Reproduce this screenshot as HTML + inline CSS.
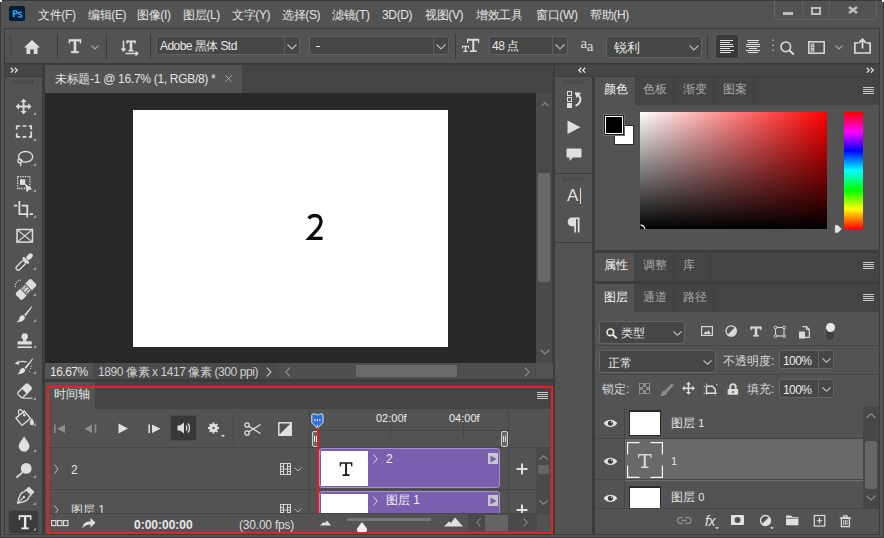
<!DOCTYPE html>
<html><head><meta charset="utf-8">
<style>
*{box-sizing:border-box;margin:0;padding:0}
html,body{width:884px;height:538px;overflow:hidden;background:#505050}
body{position:relative;font-family:"Liberation Sans",sans-serif;font-size:12px;color:#d8d8d8}
.a{position:absolute}
.t{white-space:nowrap;line-height:1}
svg{position:absolute;overflow:visible}
.sep{position:absolute;width:1px;background:#3c3c3c}
.dd{position:absolute;background:#464646;border:1px solid #626262;border-radius:3px}
.m{position:absolute;top:8.6px;font-size:12px;color:#e4e4e4;letter-spacing:-0.35px;white-space:nowrap;line-height:1}
</style></head><body>
<!-- frame -->
<div class="a" style="left:0;top:0;width:884px;height:538px;border:1px solid #3a3a3a;border-radius:3px 3px 0 0;background:#535353"></div>
<div class="a" style="left:0;top:0;width:2px;height:2px;background:#e8e8e8"></div>
<div class="a" style="left:882px;top:0;width:2px;height:2px;background:#e8e8e8"></div>

<!-- menu bar -->
<div class="a" style="left:9px;top:6px;width:16px;height:15px;background:#001e36;border-radius:2px"></div>
<svg style="left:0;top:0" width="30" height="30"><path fill-rule="evenodd" d="M12.8 10.2H15.6C17.2 10.2 17.9 11.1 17.9 12.3C17.9 13.6 17.1 14.6 15.6 14.6H14.4V17H12.8ZM14.4 11.5V13.3H15.5C16 13.3 16.3 12.9 16.3 12.4C16.3 11.8 16 11.5 15.5 11.5Z" fill="#31a8ff"/><path d="M22 12.9C21.3 12.4 20.7 12.2 20 12.2C19.1 12.2 18.5 12.6 18.5 13.3C18.5 14.9 22 14.3 22 15.9C22 16.6 21.3 17.1 20.2 17.1C19.4 17.1 18.7 16.8 18.1 16.3" stroke="#31a8ff" stroke-width="1.3" fill="none"/></svg>
<div class="m" style="left:38px">文件(F)</div>
<div class="m" style="left:88px">编辑(E)</div>
<div class="m" style="left:137px">图像(I)</div>
<div class="m" style="left:183px">图层(L)</div>
<div class="m" style="left:232px">文字(Y)</div>
<div class="m" style="left:282px">选择(S)</div>
<div class="m" style="left:332px">滤镜(T)</div>
<div class="m" style="left:382px">3D(D)</div>
<div class="m" style="left:425px">视图(V)</div>
<div class="m" style="left:476px">增效工具</div>
<div class="m" style="left:536px">窗口(W)</div>
<div class="m" style="left:590px">帮助(H)</div>
<div class="a" style="left:774px;top:-3px;width:103px;height:23px;border:1px solid #636363;border-radius:4px"></div>
<div class="sep" style="left:802px;top:0;height:19px;background:#5e5e5e"></div>
<div class="sep" style="left:829px;top:0;height:19px;background:#5e5e5e"></div>
<div class="a" style="left:783px;top:12px;width:10px;height:3px;background:#bdbdbd"></div>
<div class="a" style="left:811px;top:7px;width:10px;height:8px;border:2px solid #bdbdbd"></div>
<svg style="left:0;top:0" width="884" height="30"><path d="M849 7L857 13M857 7L849 13" stroke="#bdbdbd" stroke-width="2.6"/></svg>

<!-- options bar -->
<div class="a" style="left:4px;top:28px;width:876px;height:36px;background:#535353;border:1px solid #3a3a3a"></div>
<svg style="left:9px;top:37px" width="3" height="20"><path d="M1.5 0V19" stroke="#3e3e3e" stroke-width="1.6" stroke-dasharray="1 1"/></svg>
<svg style="left:24px;top:40px" width="16" height="14"><path d="M8 0L16 7.5H13.5V14H9.8V9.5H6.2V14H2.5V7.5H0Z" fill="#dcdcdc"/></svg>
<div class="sep" style="left:57px;top:34px;height:25px"></div>
<svg style="left:0;top:0" width="100" height="60"><path d="M68.8 39.3H81.1V43.3H79.9V41.3H76.1V51.3H78.7V53H71.2V51.3H73.8V41.3H70V43.3H68.8Z" fill="#dcdcdc" stroke="#dcdcdc" stroke-width="0.3"/></svg>
<svg style="left:91px;top:45px" width="8" height="5"><path d="M0.5 0.5L4 4L7.5 0.5" stroke="#a8a8a8" fill="none" stroke-width="1.1"/></svg>
<div class="sep" style="left:106px;top:34px;height:25px"></div>
<svg style="left:121px;top:40px" width="18" height="16"><path d="M2.5 0.5V10.5M0.5 8.5L2.5 10.8L4.5 8.5" stroke="#dcdcdc" fill="none" stroke-width="1.5"/><path d="M5.5 0.8H14.5V3.3H13.6V2H11V10.2H12.3V11.3H7.7V10.2H9V2H6.4V3.3H5.5Z" fill="#dcdcdc" stroke="#dcdcdc" stroke-width="0.6"/><path d="M4.5 13.5H16.5M14.5 11.5L16.8 13.5L14.5 15.5" stroke="#dcdcdc" fill="none" stroke-width="1.5"/></svg>
<div class="sep" style="left:150px;top:34px;height:25px"></div>

<div class="dd" style="left:156px;top:36px;width:144px;height:19px"></div>
<div class="sep" style="left:284px;top:37px;height:17px;background:#5e5e5e"></div>
<div class="a t" style="left:160px;top:40px;font-size:12px;color:#e8e8e8;letter-spacing:-0.55px">Adobe 黑体 Std</div>
<svg style="left:287px;top:44px" width="10" height="6"><path d="M0.5 0.5L5 5L9.5 0.5" stroke="#bdbdbd" fill="none" stroke-width="1.1"/></svg>

<div class="dd" style="left:309px;top:36px;width:140px;height:19px"></div>
<div class="sep" style="left:433px;top:37px;height:17px;background:#5e5e5e"></div>
<div class="a" style="left:316px;top:46px;width:4px;height:1px;background:#e8e8e8"></div>
<svg style="left:436px;top:44px" width="10" height="6"><path d="M0.5 0.5L5 5L9.5 0.5" stroke="#bdbdbd" fill="none" stroke-width="1.1"/></svg>
<div class="sep" style="left:455px;top:34px;height:25px"></div>

<svg style="left:0;top:0" width="884" height="60"><path d="M467 38.8H479.2V43H478V40.7H474.3V50.3H476.6V52H470V50.3H472.3V40.7H468.2V43H467Z" fill="#dcdcdc"/><path d="M462 45.8H469V48.4H468.1V47.1H466.2V50.8H467.6V52H463.4V50.8H464.8V47.1H462.9V48.4H462Z" fill="#dcdcdc"/></svg>
<div class="dd" style="left:489px;top:36px;width:79px;height:19px"></div>
<div class="sep" style="left:552px;top:37px;height:17px;background:#5e5e5e"></div>
<div class="a t" style="left:492px;top:40px;font-size:12px;color:#e8e8e8;letter-spacing:-0.5px">48 点</div>
<svg style="left:555px;top:44px" width="10" height="6"><path d="M0.5 0.5L5 5L9.5 0.5" stroke="#bdbdbd" fill="none" stroke-width="1.1"/></svg>
<div class="a t" style="left:580.5px;top:35.7px;font-size:15px;font-family:'Liberation Serif',serif;color:#dcdcdc">a</div>
<div class="a t" style="left:586.8px;top:38.8px;font-size:15px;font-family:'Liberation Serif',serif;color:#dcdcdc">a</div>

<div class="dd" style="left:606px;top:36px;width:96px;height:22px"></div>
<div class="a t" style="left:614px;top:41px;font-size:13px;color:#e8e8e8">锐利</div>
<svg style="left:689px;top:45px" width="10" height="6"><path d="M0.5 0.5L5 5L9.5 0.5" stroke="#bdbdbd" fill="none" stroke-width="1.1"/></svg>
<div class="sep" style="left:707px;top:34px;height:25px"></div>

<div class="a" style="left:715px;top:34px;width:24px;height:25px;background:#393939;border:1px solid #5a5a5a;border-radius:3px"></div>
<svg style="left:0;top:0" width="800" height="60"><path d="M720 40.5H733M720 42.5H730M720 44.5H733M720 46.5H734M720 48.5H730M720 50.5H734M720 52.5H731" stroke="#e4e4e4" stroke-width="1"/></svg>
<svg style="left:0;top:0" width="800" height="60"><path d="M747 40.5H759M748 42.5H758M746 44.5H760M746 46.5H760M749 48.5H757M746 50.5H760M748 52.5H758" stroke="#e4e4e4" stroke-width="1"/></svg>
<svg style="left:772px;top:39px" width="2" height="13"><path d="M1 0.5V2M1 5.5V7M1 10.5V12" stroke="#bdbdbd" stroke-width="1.3"/></svg>
<svg style="left:780px;top:41px" width="15" height="14"><circle cx="5.8" cy="5.8" r="4.8" stroke="#dcdcdc" stroke-width="1.6" fill="none"/><path d="M9.3 9.3L13.8 13.6" stroke="#dcdcdc" stroke-width="2"/></svg>
<svg style="left:808px;top:41px" width="18" height="13"><rect x="0.8" y="0.8" width="15.4" height="11.4" stroke="#dcdcdc" stroke-width="1.5" fill="none"/><rect x="3.2" y="3" width="2.6" height="2" fill="none" stroke="#dcdcdc" stroke-width="0.9"/><rect x="3.2" y="5.6" width="2.6" height="2" fill="none" stroke="#dcdcdc" stroke-width="0.9"/><rect x="3.2" y="8.2" width="2.6" height="2" fill="none" stroke="#dcdcdc" stroke-width="0.9"/></svg>
<svg style="left:835px;top:45px" width="8" height="5"><path d="M0.5 0.5L4 4L7.5 0.5" stroke="#a8a8a8" fill="none" stroke-width="1.1"/></svg>
<svg style="left:854px;top:38px" width="17" height="16"><path d="M4.5 5H0.9V15H16.1V5H12.5" stroke="#dcdcdc" stroke-width="1.7" fill="none"/><path d="M8.5 10.5V1.5M5 4.8L8.5 1.2L12 4.8" stroke="#dcdcdc" stroke-width="1.8" fill="none"/></svg>

<!-- left toolbar -->
<div class="a" style="left:4px;top:64px;width:40px;height:471px;background:#3c3c3c"></div>
<div class="a" style="left:5px;top:65px;width:37px;height:11px;background:#454545"></div>
<svg style="left:10px;top:67px" width="10" height="7"><path d="M0.8 0.8L3.2 3.2L0.8 5.6M4.8 0.8L7.2 3.2L4.8 5.6" stroke="#e0e0e0" fill="none" stroke-width="1.3"/></svg>
<div class="a" style="left:5px;top:77px;width:37px;height:457px;background:#535353"></div>
<svg style="left:0;top:0" width="50" height="100"><path d="M14.5 80V84M16.5 80V84M18.5 80V84M20.5 80V84M22.5 80V84M24.5 80V84M26.5 80V84M28.5 80V84M30.5 80V84M32.5 80V84" stroke="#444" stroke-width="1"/></svg>
<!-- tool icons -->
<svg style="left:0;top:0" width="50" height="538">
<g fill="#a4a4a4" stroke="none">
<path d="M36 112V115H33Z"/><path d="M36 138V141H33Z"/><path d="M36 163V166H33Z"/><path d="M36 189V192H33Z"/><path d="M36 215V218H33Z"/>
<path d="M36 267V270H33Z"/><path d="M36 293V296H33Z"/><path d="M36 319V322H33Z"/><path d="M36 345V348H33Z"/><path d="M36 371V374H33Z"/>
<path d="M36 397V400H33Z"/><path d="M36 423V426H33Z"/><path d="M36 449V452H33Z"/><path d="M36 475V478H33Z"/><path d="M36 502V505H33Z"/>
</g>
<g fill="#dedede" stroke="#dedede" stroke-width="1.8" fill-rule="nonzero">
<!-- move -->
<path d="M23.6 101V112M18.5 106.5H28.7" fill="none"/>
<path d="M23.6 98.7L20.4 102H26.8Z M23.6 114.3L20.4 111H26.8Z M15.7 106.5L19 103.3V109.7Z M31.5 106.5L28.2 103.3V109.7Z" stroke="none"/>
<!-- marquee -->
<path d="M16.7 129.5V126H20.2M22.6 126H26.4M28.8 126H31.2V129.5M31.2 131.6V133.3M31.2 133.3V136.8H28.8M26.4 136.8H22.6M20.2 136.8H16.7V133.3M16.7 131.6V131.6" fill="none" stroke-width="1.7"/>
<!-- lasso -->
<ellipse cx="25.6" cy="156.8" rx="7.1" ry="5.3" fill="none" stroke-width="1.4"/>
<circle cx="19.8" cy="161" r="1.9" fill="none" stroke-width="1.3"/>
<path d="M20.5 162.8Q21.5 165 20.3 166.3" fill="none" stroke-width="1.3"/>
<!-- object select -->
<rect x="17.6" y="176.7" width="12.2" height="11.8" fill="none" stroke-width="1.3" stroke-dasharray="1.3 1.1"/>
<rect x="20" y="179.3" width="5.2" height="5.6" stroke="none"/>
<path d="M24.8 183.2L32.6 189.6L29 189.8L26.8 192.4Z" stroke="none"/>
<!-- crop -->
<path d="M13.9 205.6H17.3M19.4 201V214.1H27.3M21.6 205.6H27.3V217.6M29.5 214.1H33" fill="none" stroke-width="1.8"/>
<!-- frame -->
<rect x="17" y="229.5" width="15.5" height="12.6" fill="none" stroke-width="1.5"/>
<path d="M17 229.5L32.5 242.1M32.5 229.5L17 242.1" fill="none" stroke-width="1.1"/>
<!-- eyedropper -->
<g transform="rotate(45 24.1 262.1)">
<rect x="22" y="261" width="4.2" height="11.5" rx="2.1" fill="none" stroke-width="1.3"/>
<rect x="19.9" y="258.4" width="8.4" height="2.6" rx="1" stroke="none"/>
<rect x="21.8" y="250.8" width="4.6" height="7.2" rx="2.3" stroke="none"/>
</g>
<!-- healing -->
<g transform="rotate(45 26 289.5)">
<rect x="21.3" y="278.5" width="9.4" height="22" rx="2" stroke="none"/>
<rect x="21.3" y="285.8" width="9.4" height="7.4" fill="#535353" stroke="none"/>
<rect x="22.3" y="286.8" width="7.4" height="5.4" stroke="none"/>
<circle cx="24.3" cy="288.3" r="0.9" fill="#535353" stroke="none"/><circle cx="27.7" cy="288.3" r="0.9" fill="#535353" stroke="none"/>
<circle cx="24.3" cy="290.7" r="0.9" fill="#535353" stroke="none"/><circle cx="27.7" cy="290.7" r="0.9" fill="#535353" stroke="none"/>
</g>
<path d="M15.4 287A5.8 5.8 0 0 1 22 280.2" fill="none" stroke-width="1.1" stroke-dasharray="1.1 1.1"/>
<!-- brush -->
<path d="M31.6 306.2L24.2 314.8L25.6 316.2L32.2 306.9Z" stroke="none"/>
<path d="M23.4 315.3C20.5 315.2 19.3 317.3 19.2 318.9C19.1 320.3 17.9 321.4 16.2 322.1C20 322.6 24.5 321 25 317.3Z" stroke="none"/>
<!-- stamp -->
<circle cx="24.7" cy="336.4" r="3.2" stroke="none"/>
<rect x="23.1" y="338.5" width="3.2" height="3" stroke="none"/>
<rect x="17.6" y="341.2" width="14.2" height="3.4" rx="0.6" stroke="none"/>
<rect x="17.6" y="346.4" width="14.2" height="1.6" stroke="none"/>
<!-- history brush -->
<path d="M32.3 358.5L24.6 367.5L26 368.9L32.9 359.3Z" stroke="none"/>
<path d="M23.8 368C20.8 367.9 19.6 370 19.5 371.4C19.4 372.6 18.4 373.5 16.8 374C20.5 374.6 24.8 373.2 25.4 369.8Z" stroke="none"/>
<path d="M26.5 362.2Q21.8 360.3 17.8 362.8" fill="none" stroke-width="1.3"/>
<path d="M14.7 363.4L18.8 360.6L18.9 365Z" stroke="none"/>
<circle cx="31.3" cy="366" r="0.6" stroke="none"/><circle cx="30.5" cy="368.5" r="0.6" stroke="none"/><circle cx="29.3" cy="371" r="0.6" stroke="none"/>
<!-- eraser -->
<g transform="rotate(-45 24.5 391)">
<rect x="17.6" y="387.4" width="14" height="7" rx="1.5" fill="none" stroke-width="1.3"/>
<rect x="24.2" y="387.4" width="7.4" height="7" rx="1" stroke="none"/>
</g>
<path d="M23 398.2H32.5" fill="none" stroke-width="1.1"/>
<!-- bucket -->
<g transform="rotate(-40 23 418)">
<rect x="17.5" y="413.5" width="11" height="9.5" fill="none" stroke-width="1.4"/>
</g>
<path d="M18.8 414.5Q17.5 410 20.2 409.6Q22.5 409.6 24.5 415" fill="none" stroke-width="1.2"/>
<circle cx="24.4" cy="415.2" r="1.2" stroke="none"/>
<path d="M31.8 418.2C30.4 420.4 29.6 421.8 29.8 423.2A2.1 2.1 0 0 0 34 423.2C34.2 421.8 33.2 420.4 31.8 418.2Z" stroke="none"/>
<!-- blur -->
<path d="M24.1 436.2C22 440 18.7 443.3 18.7 446.3A5.4 5.4 0 0 0 29.5 446.3C29.5 443.3 26.2 440 24.1 436.2Z" stroke="none"/>
<!-- dodge -->
<circle cx="26.2" cy="468.4" r="5.4" stroke="none"/>
<path d="M22.4 472.3L16.4 477.6" fill="none" stroke-width="1.8"/>
<!-- pen -->
<g transform="rotate(45 24.5 496.4)">
<path d="M21 490.5H28V493L29 496C29 500 26.5 503 24.5 506C22.5 503 20 500 20 496L21 493Z" fill="none" stroke-width="1.3" stroke-linejoin="round"/>
<rect x="20.6" y="486.3" width="7.8" height="3.6" rx="0.6" stroke="none"/>
<path d="M24.5 498V506" fill="none" stroke-width="1"/>
<circle cx="24.5" cy="497.3" r="1.2" stroke="none"/>
</g>
</g>
</svg>
<div class="a" style="left:8px;top:510px;width:31px;height:24px;background:#3b3b3b;border:1px solid #4c4c4c;border-radius:3px"></div>
<svg style="left:0;top:0" width="50" height="538"><path d="M18.8 515.2H31.3V519.8H30V516.9H26.2V527.6H28.6V529.2H21.6V527.6H24V516.9H20.1V519.8H18.8Z" fill="#e8e8e8" stroke="#e8e8e8" stroke-width="0.2"/><path d="M36 527.6V530.6H33Z" fill="#a4a4a4"/></svg>

<!-- document -->
<div class="a" style="left:44px;top:64px;width:512px;height:471px;background:#3c3c3c"></div>
<div class="a" style="left:45px;top:65px;width:508px;height:28px;background:#444444"></div>
<div class="a" style="left:45px;top:65px;width:197px;height:28px;background:#535353"></div>
<div class="a t" style="left:55px;top:73px;font-size:12px;color:#e4e4e4;letter-spacing:-0.3px">未标题-1 @ 16.7% (1, RGB/8) *</div>
<svg style="left:225px;top:75px" width="7" height="7"><path d="M0.3 0.3L6.7 6.7M6.7 0.3L0.3 6.7" stroke="#a8a8a8" stroke-width="1"/></svg>
<div class="a" style="left:45px;top:93px;width:491px;height:270px;background:#282828"></div>
<div class="a" style="left:133px;top:110px;width:315px;height:237px;background:#fff"></div>
<svg style="left:0;top:0" width="400" height="300"><path transform="translate(0.6 0.8)" d="M308 217.6C309.7 215.7 311.9 214.7 314.3 214.7C318.4 214.7 320.4 217.4 320.4 220.6C320.4 224.2 318.4 227 314.8 230.8L308.5 237.6H322" stroke="#0a0a0a" stroke-width="3.3" fill="none" stroke-linejoin="miter"/></svg>
<!-- v scrollbar -->
<div class="a" style="left:536px;top:93px;width:16px;height:270px;background:#4a4a4a"></div>
<svg style="left:541px;top:102px" width="8" height="5"><path d="M0.5 4.2L4 0.8L7.5 4.2" stroke="#8a8a8a" fill="none" stroke-width="1.1"/></svg>
<div class="a" style="left:538px;top:173px;width:12px;height:109px;background:#686868;border-radius:1px"></div>
<svg style="left:540px;top:349px" width="10" height="6"><path d="M0.5 0.8L5 5L9.5 0.8" stroke="#8a8a8a" fill="none" stroke-width="1.2"/></svg>
<!-- status bar -->
<div class="a" style="left:45px;top:363px;width:508px;height:16px;background:#4a4a4a"></div>
<div class="a" style="left:45px;top:363px;width:48px;height:16px;background:#535353"></div>
<div class="a t" style="left:50px;top:366px;font-size:12px;color:#e4e4e4;letter-spacing:-0.5px">16.67%</div>
<div class="a t" style="left:98px;top:366px;font-size:12px;color:#d0d0d0;letter-spacing:-0.42px">1890 像素 x 1417 像素 (300 ppi)</div>
<svg style="left:266px;top:367px" width="6" height="10"><path d="M0.8 0.5L5 5L0.8 9.5" stroke="#c0c0c0" fill="none" stroke-width="1.1"/></svg>
<div class="a" style="left:277px;top:363px;width:258px;height:16px;background:#4e4e4e"></div>
<svg style="left:284.5px;top:367px" width="6" height="10"><path d="M5 0.5L0.8 5L5 9.5" stroke="#8a8a8a" fill="none" stroke-width="1.1"/></svg>
<div class="a" style="left:356px;top:365px;width:101px;height:12px;background:#6a6a6a;border-radius:1px"></div>
<svg style="left:524px;top:367px" width="6" height="10"><path d="M0.8 0.5L5 5L0.8 9.5" stroke="#8a8a8a" fill="none" stroke-width="1.1"/></svg>
<div class="a" style="left:536px;top:363px;width:17px;height:16px;background:#535353"></div>
<!-- timeline panel -->
<div class="a" style="left:45px;top:382px;width:508px;height:152px;background:#535353"></div>
<div class="a" style="left:95px;top:382px;width:458px;height:27px;background:#444444"></div>
<div class="a t" style="left:54px;top:388px;font-size:12px;color:#e4e4e4">时间轴</div>
<svg style="left:537px;top:392px" width="11" height="7"><path d="M0 0.5H11M0 2.5H11M0 4.5H11M0 6.5H11" stroke="#c8c8c8" stroke-width="1"/></svg>
<!-- controls -->
<svg style="left:54px;top:424px" width="12" height="10"><path d="M0.8 0.5V9" stroke="#8c8c8c" stroke-width="1.6"/><path d="M11 0.5V9L3 4.8Z" fill="#8c8c8c"/></svg>
<svg style="left:84px;top:424px" width="13" height="10"><path d="M8 0.5V9L0.5 4.8Z" fill="#8c8c8c"/><path d="M11.5 0.5V9" stroke="#8c8c8c" stroke-width="1.6"/></svg>
<svg style="left:118px;top:423px" width="11" height="11"><path d="M0.5 0.5V10.5L10 5.5Z" fill="#e0e0e0"/></svg>
<svg style="left:148px;top:424px" width="13" height="10"><path d="M1.2 0.5V9" stroke="#e0e0e0" stroke-width="1.6"/><path d="M4 0.5V9L12.5 4.8Z" fill="#e0e0e0"/></svg>
<div class="a" style="left:170px;top:415px;width:27px;height:26px;background:#383838;border:1px solid #4a4a4a;border-radius:3px"></div>
<svg style="left:177px;top:422px" width="14" height="12"><path d="M0.5 3.5H3L7 0.5V11.5L3 8.5H0.5Z" fill="#e0e0e0"/><path d="M9 3.5C10 4.5 10 7.5 9 8.5M11 1.5C13 3.5 13 8.5 11 10.5" stroke="#e0e0e0" stroke-width="1.3" fill="none"/></svg>
<svg style="left:208px;top:422px" width="18" height="16"><g transform="translate(5.5 6)"><circle r="3.2" fill="none" stroke="#e0e0e0" stroke-width="2.2"/><path d="M0 -5.5V5.5M-5.5 0H5.5M-3.9 -3.9L3.9 3.9M3.9 -3.9L-3.9 3.9" stroke="#e0e0e0" stroke-width="1.8"/><circle r="1.2" fill="#535353"/></g><path d="M13 13H17L15 15Z" fill="#e0e0e0"/></svg>
<div class="sep" style="left:233px;top:413px;height:31px;background:#474747"></div>
<svg style="left:244px;top:422px" width="18" height="14"><circle cx="3" cy="3" r="2.2" stroke="#e0e0e0" stroke-width="1.3" fill="none"/><circle cx="3" cy="11" r="2.2" stroke="#e0e0e0" stroke-width="1.3" fill="none"/><path d="M4.8 4.3L16.5 11.5M4.8 9.7L16.5 2.5" stroke="#e0e0e0" stroke-width="1.3"/></svg>
<svg style="left:278px;top:422px" width="14" height="14"><rect x="0.8" y="0.8" width="12.4" height="12.4" stroke="#e0e0e0" stroke-width="1.5" fill="none"/><path d="M13 1V13H1Z" fill="#e0e0e0"/></svg>
<!-- timeline left rows -->
<div class="a" style="left:45px;top:447px;width:264px;height:1px;background:#474747"></div>
<div class="a" style="left:45px;top:489px;width:264px;height:1px;background:#474747"></div>
<svg style="left:54px;top:464px" width="5" height="10"><path d="M0.5 0.5L4 5L0.5 9.5" stroke="#c0c0c0" fill="none" stroke-width="1"/></svg>
<div class="a t" style="left:71px;top:464px;font-size:12px;color:#e4e4e4">2</div>
<svg style="left:280px;top:463px" width="12" height="13"><rect x="0.5" y="0.5" width="10" height="11" stroke="#d4d4d4" stroke-width="1" fill="none"/><path d="M3.5 0.5V11.5M7.5 0.5V11.5M3.5 6H7.5M0.5 3.5H3.5M0.5 6H3.5M0.5 8.5H3.5M7.5 3.5H10.5M7.5 6H10.5M7.5 8.5H10.5" stroke="#d4d4d4" stroke-width="1"/></svg>
<svg style="left:294px;top:467px" width="8" height="5"><path d="M0.5 0.5L4 4L7.5 0.5" stroke="#b0b0b0" fill="none" stroke-width="1"/></svg>
<svg style="left:54px;top:505px" width="5" height="10"><path d="M0.5 0.5L4 5L0.5 9.5" stroke="#c0c0c0" fill="none" stroke-width="1"/></svg>
<div class="a t" style="left:71px;top:504px;font-size:12px;color:#e4e4e4">图层 1</div>
<svg style="left:280px;top:504px" width="12" height="13"><rect x="0.5" y="0.5" width="10" height="11" stroke="#d4d4d4" stroke-width="1" fill="none"/><path d="M3.5 0.5V11.5M7.5 0.5V11.5M3.5 6H7.5M0.5 3.5H3.5M0.5 6H3.5M0.5 8.5H3.5M7.5 3.5H10.5M7.5 6H10.5M7.5 8.5H10.5" stroke="#d4d4d4" stroke-width="1"/></svg>
<svg style="left:294px;top:508px" width="8" height="5"><path d="M0.5 0.5L4 4L7.5 0.5" stroke="#b0b0b0" fill="none" stroke-width="1"/></svg>
<div class="a" style="left:309px;top:410px;width:1px;height:104px;background:#474747"></div>
<!-- ruler -->
<div class="a" style="left:310px;top:430px;width:198px;height:1px;background:#474747"></div>
<div class="a" style="left:390px;top:423px;width:1px;height:14px;background:#474747"></div>
<div class="a" style="left:463px;top:423px;width:1px;height:14px;background:#474747"></div>
<div class="a t" style="left:376px;top:413px;font-size:11px;color:#f0f0f0">02:00f</div>
<div class="a t" style="left:449px;top:413px;font-size:11px;color:#f0f0f0">04:00f</div>
<div class="a" style="left:508px;top:410px;width:1px;height:104px;background:#474747"></div>
<div class="a" style="left:310px;top:447px;width:243px;height:1px;background:#474747"></div>
<div class="a" style="left:310px;top:489px;width:243px;height:1px;background:#474747"></div>
<!-- clips -->
<div class="a" style="left:319px;top:448px;width:181px;height:40px;background:#7a5fae;border:1px solid #a48fd2;border-radius:3px"></div>
<div class="a" style="left:321px;top:451px;width:47px;height:35px;background:#fff"></div>
<svg style="left:0;top:0" width="400" height="500"><path d="M339.7 462.2H352.4V466.3H351V463.7H347V474.3H349.6V475.9H342.5V474.3H345.1V463.7H341.1V466.3H339.7Z" fill="#1a1a1a"/></svg>
<svg style="left:373px;top:454px" width="5" height="10"><path d="M0.5 0.5L4 5L0.5 9.5" stroke="#dcd4ee" fill="none" stroke-width="1"/></svg>
<div class="a t" style="left:386px;top:453px;font-size:12px;color:#f0f0f0">2</div>
<div class="a" style="left:488px;top:453px;width:10px;height:11px;background:#c8c8c8"></div>
<svg style="left:490px;top:455px" width="7" height="8"><path d="M0.5 0.5V7.5L6.5 4Z" fill="#7a5fae"/></svg>
<div class="a" style="left:319px;top:491px;width:181px;height:40px;background:#7a5fae;border:1px solid #a48fd2;border-radius:3px"></div>
<div class="a" style="left:321px;top:494px;width:47px;height:35px;background:#fff"></div>
<svg style="left:373px;top:496px" width="5" height="10"><path d="M0.5 0.5L4 5L0.5 9.5" stroke="#dcd4ee" fill="none" stroke-width="1"/></svg>
<div class="a t" style="left:386px;top:494px;font-size:12px;color:#f0f0f0">图层 1</div>
<div class="a" style="left:488px;top:495px;width:10px;height:11px;background:#c8c8c8"></div>
<svg style="left:490px;top:497px" width="7" height="8"><path d="M0.5 0.5V7.5L6.5 4Z" fill="#7a5fae"/></svg>
<!-- playhead -->
<svg style="left:311px;top:413px" width="14" height="16"><path d="M0.8 2.2Q0.8 1 2 1H4.2L5 1.8H7.8L8.6 1H10.8Q12 1 12 2.2V9.5L6.4 15.2L0.8 9.5Z" fill="#2a6fd8" stroke="#dfe9f7" stroke-width="1"/><path d="M4 6V8.2M6.4 6V8.2M8.8 6V8.2" stroke="#e8f0ff" stroke-width="1.1"/><path d="M6.4 11.5V14" stroke="#e8f0ff" stroke-width="0.8"/></svg>
<div class="a" style="left:312px;top:431px;width:7px;height:16px;background:#686868;border:1px solid #d0d0d0;border-radius:2px"></div>
<div class="a" style="left:314px;top:436px;width:1px;height:6px;background:#f0f0f0"></div>
<div class="a" style="left:316px;top:436px;width:1px;height:6px;background:#f0f0f0"></div>
<div class="a" style="left:317px;top:428px;width:2px;height:86px;background:#e41c1c"></div>
<div class="a" style="left:501px;top:431px;width:7px;height:16px;background:#686868;border:1px solid #d0d0d0;border-radius:2px"></div>
<div class="a" style="left:503px;top:436px;width:1px;height:6px;background:#e0e0e0"></div>
<div class="a" style="left:505px;top:436px;width:1px;height:6px;background:#e0e0e0"></div>
<!-- plus column -->
<svg style="left:516px;top:463px" width="12" height="12"><path d="M6 0.5V11.5M0.5 6H11.5" stroke="#e0e0e0" stroke-width="2"/></svg>
<svg style="left:516px;top:504px" width="12" height="12"><path d="M6 0.5V11.5M0.5 6H11.5" stroke="#e0e0e0" stroke-width="2"/></svg>
<div class="a" style="left:536px;top:448px;width:14px;height:66px;background:#4a4a4a"></div>
<svg style="left:539px;top:455px" width="9" height="5"><path d="M0.5 4.5L4.5 0.8L8.5 4.5" stroke="#8a8a8a" fill="none" stroke-width="1.1"/></svg>
<div class="a" style="left:538px;top:465px;width:11px;height:9px;background:#646464"></div>
<svg style="left:539px;top:500px" width="9" height="5"><path d="M0.5 0.5L4.5 4.2L8.5 0.5" stroke="#8a8a8a" fill="none" stroke-width="1.1"/></svg>
<!-- bottom bar -->
<div class="a" style="left:45px;top:513px;width:508px;height:1px;background:#474747"></div>
<div class="a" style="left:45px;top:514px;width:508px;height:20px;background:#535353"></div>
<svg style="left:51px;top:520px" width="18" height="7"><rect x="0.6" y="0.6" width="4.3" height="5" stroke="#e0e0e0" stroke-width="1.1" fill="none"/><rect x="6.6" y="0.6" width="4.3" height="5" stroke="#e0e0e0" stroke-width="1.1" fill="none"/><rect x="12.6" y="0.6" width="4.3" height="5" stroke="#e0e0e0" stroke-width="1.1" fill="none"/></svg>
<svg style="left:82px;top:517px" width="14" height="12"><path d="M0.5 11.5C1 6 4 4.5 8.5 4.5V1L13.5 5.8L8.5 10.5V7.5C5 7.5 2.5 8.5 0.5 11.5Z" fill="#e0e0e0"/></svg>
<div class="a t" style="left:134px;top:519px;font-size:12px;font-weight:bold;color:#e8e8e8">0:00:00:00</div>
<div class="a t" style="left:239px;top:519px;font-size:12px;color:#dcdcdc;letter-spacing:-0.2px">(30.00 fps)</div>
<svg style="left:320px;top:520px" width="11" height="6"><path d="M0 5.5L3.5 2L5 3L7 0.5L11 5.5Z" fill="#e0e0e0"/></svg>
<div class="a" style="left:347px;top:518px;width:84px;height:3px;background:#777"></div>
<svg style="left:356px;top:521px" width="12" height="13"><path d="M6 1L10.6 7C11.6 8.5 11.2 12.5 6 12.5C0.8 12.5 0.4 8.5 1.4 7Z" fill="#f0f0f0"/></svg>
<svg style="left:444px;top:517px" width="19" height="10"><path d="M0 9.5L5 4.5L7 6L11 0.5L19 9.5Z" fill="#e0e0e0"/></svg>
<div class="a" style="left:468px;top:514px;width:69px;height:17px;background:#4a4a4a"></div>
<svg style="left:476px;top:518px" width="5" height="9"><path d="M4.5 0.5L0.8 4.5L4.5 8.5" stroke="#8a8a8a" fill="none" stroke-width="1.1"/></svg>
<div class="a" style="left:485px;top:515px;width:23px;height:16px;background:#646464"></div>
<svg style="left:523px;top:518px" width="5" height="9"><path d="M0.5 0.5L4.2 4.5L0.5 8.5" stroke="#8a8a8a" fill="none" stroke-width="1.1"/></svg>
<!-- red outline -->
<div class="a" style="left:47px;top:386px;width:506px;height:148px;border:2px solid #e8202a"></div>
<!-- middle column -->
<div class="a" style="left:553px;top:64px;width:327px;height:471px;background:#3c3c3c"></div>
<div class="a" style="left:555px;top:65px;width:324px;height:11px;background:#454545"></div>
<svg style="left:578px;top:67px" width="10" height="7"><path d="M3.2 0.8L0.8 3.2L3.2 5.6M7.2 0.8L4.8 3.2L7.2 5.6" stroke="#e0e0e0" fill="none" stroke-width="1.3"/></svg>
<svg style="left:866px;top:67px" width="10" height="7"><path d="M0.8 0.8L3.2 3.2L0.8 5.6M4.8 0.8L7.2 3.2L4.8 5.6" stroke="#e0e0e0" fill="none" stroke-width="1.3"/></svg>
<div class="a" style="left:555px;top:77px;width:37px;height:96px;background:#535353"></div>
<div class="a" style="left:555px;top:174px;width:37px;height:68px;background:#535353"></div>
<div class="a" style="left:555px;top:243px;width:37px;height:291px;background:#535353"></div>
<svg style="left:0;top:0" width="600" height="200"><path d="M564.5 80V84M566.5 80V84M568.5 80V84M570.5 80V84M572.5 80V84M574.5 80V84M576.5 80V84M578.5 80V84M580.5 80V84M582.5 80V84" stroke="#444" stroke-width="1"/></svg>
<svg style="left:0;top:0" width="600" height="200"><path d="M564.5 177V181M566.5 177V181M568.5 177V181M570.5 177V181M572.5 177V181M574.5 177V181M576.5 177V181M578.5 177V181M580.5 177V181M582.5 177V181" stroke="#444" stroke-width="1"/></svg>
<svg style="left:0;top:0" width="600" height="120"><rect x="567.5" y="91.5" width="4" height="4" stroke="#e0e0e0" stroke-width="1" fill="none"/><rect x="567.5" y="97.5" width="4" height="4" stroke="#e0e0e0" stroke-width="1" fill="none"/><rect x="567" y="103" width="5" height="5" fill="#e0e0e0"/><path d="M574.8 92.2L581.2 92.8L576.6 98Z" fill="#e0e0e0"/><path d="M578.3 95.3C581.6 98 581.2 103.2 575.6 105.8" stroke="#e0e0e0" stroke-width="1.9" fill="none"/></svg>
<svg style="left:567px;top:120px" width="14" height="15"><path d="M0.5 0.5V14L13.5 7.2Z" fill="#e0e0e0"/></svg>
<svg style="left:566px;top:148px" width="16" height="14"><path d="M1.5 0.5H14.5Q15.5 0.5 15.5 1.5V8.5Q15.5 9.5 14.5 9.5H7L3.5 13V9.5H1.5Q0.5 9.5 0.5 8.5V1.5Q0.5 0.5 1.5 0.5Z" fill="#e0e0e0"/></svg>
<div class="a t" style="left:567px;top:187px;font-size:17px;color:#e0e0e0">A</div>
<div class="a" style="left:580px;top:188px;width:1px;height:16px;background:#e0e0e0"></div>
<svg style="left:567px;top:217px" width="13" height="16"><path d="M5 0.5H12.5V15.5H10.8V2.2H9V15.5H7.3V9.2H5A4.35 4.35 0 0 1 5 0.5Z" fill="#e0e0e0"/></svg>

<!-- color panel -->
<div class="a" style="left:595px;top:77px;width:284px;height:28px;background:#444444"></div>
<div class="a" style="left:595px;top:77px;width:40px;height:28px;background:#535353"></div>
<div class="a" style="left:673px;top:77px;width:1px;height:27px;background:#3c3c3c"></div>
<div class="a" style="left:713px;top:77px;width:1px;height:27px;background:#3c3c3c"></div>
<div class="a" style="left:753px;top:77px;width:1px;height:27px;background:#3c3c3c"></div>
<div class="a t" style="left:604px;top:83px;font-size:12px;color:#f4f4f4">颜色</div>
<div class="a t" style="left:643px;top:83px;font-size:12px;color:#a8a8a8">色板</div>
<div class="a t" style="left:683px;top:83px;font-size:12px;color:#a8a8a8">渐变</div>
<div class="a t" style="left:723px;top:83px;font-size:12px;color:#a8a8a8">图案</div>
<svg style="left:863px;top:87px" width="11" height="9"><path d="M0 0.5H11M0 2.5H11M0 4.5H11M0 6.5H11" stroke="#c8c8c8" stroke-width="1"/></svg>
<div class="a" style="left:595px;top:105px;width:284px;height:145px;background:#535353"></div>
<div class="a" style="left:614px;top:125px;width:20px;height:20px;background:#fff;border:1px solid #2a2a2a"></div>
<div class="a" style="left:603px;top:114px;width:22px;height:22px;background:#6e6e6e"></div>
<div class="a" style="left:604px;top:115px;width:20px;height:20px;background:#1e1e1e"></div>
<div class="a" style="left:605px;top:116px;width:18px;height:18px;background:#fff"></div>
<div class="a" style="left:606px;top:117px;width:16px;height:16px;background:#000"></div>
<div class="a" style="left:640px;top:112px;width:187px;height:117px;background:linear-gradient(to bottom,rgba(0,0,0,0),#000),linear-gradient(to right,#fff,#f00)"></div>
<svg style="left:0;top:0" width="700" height="240"><path d="M640.6 225.2A4 4 0 0 1 644.8 229" stroke="#fff" stroke-width="1.2" fill="none"/></svg>
<div class="a" style="left:844px;top:112px;width:19px;height:117px;background:linear-gradient(to bottom,#f00 0%,#f0f 17%,#00f 33%,#0ff 50%,#0f0 67%,#ff0 83%,#f00 100%)"></div>
<svg style="left:834px;top:224px" width="9" height="10"><path d="M1.5 0.8H4L8.2 5L4 9.2H1.5Q0.5 9.2 0.5 8.2V1.8Q0.5 0.8 1.5 0.8Z" fill="#e0e0e0" stroke="#333" stroke-width="0.6"/></svg>

<!-- properties -->
<div class="a" style="left:595px;top:253px;width:284px;height:28px;background:#444444"></div>
<div class="a" style="left:595px;top:253px;width:39px;height:28px;background:#535353"></div>
<div class="a" style="left:673px;top:253px;width:1px;height:27px;background:#3c3c3c"></div>
<div class="a" style="left:710px;top:253px;width:1px;height:27px;background:#3c3c3c"></div>
<div class="a t" style="left:604px;top:259px;font-size:12px;color:#f4f4f4">属性</div>
<div class="a t" style="left:643px;top:259px;font-size:12px;color:#a8a8a8">调整</div>
<div class="a t" style="left:683px;top:259px;font-size:12px;color:#a8a8a8">库</div>
<svg style="left:863px;top:262px" width="11" height="9"><path d="M0 0.5H11M0 2.5H11M0 4.5H11M0 6.5H11" stroke="#c8c8c8" stroke-width="1"/></svg>

<!-- layers -->
<div class="a" style="left:595px;top:284px;width:284px;height:28px;background:#444444"></div>
<div class="a" style="left:595px;top:284px;width:39px;height:28px;background:#535353"></div>
<div class="a" style="left:673px;top:284px;width:1px;height:28px;background:#3c3c3c"></div>
<div class="a" style="left:713px;top:284px;width:1px;height:28px;background:#3c3c3c"></div>
<div class="a t" style="left:604px;top:291px;font-size:12px;color:#f4f4f4">图层</div>
<div class="a t" style="left:643px;top:291px;font-size:12px;color:#a8a8a8">通道</div>
<div class="a t" style="left:683px;top:291px;font-size:12px;color:#a8a8a8">路径</div>
<svg style="left:863px;top:294px" width="11" height="9"><path d="M0 0.5H11M0 2.5H11M0 4.5H11M0 6.5H11" stroke="#c8c8c8" stroke-width="1"/></svg>
<div class="a" style="left:595px;top:312px;width:284px;height:222px;background:#535353"></div>
<!-- filter row -->
<div class="dd" style="left:599px;top:321px;width:86px;height:23px;border-color:#646464"></div>
<svg style="left:606px;top:328px" width="12" height="11"><circle cx="4.3" cy="4.3" r="3.3" stroke="#e8e8e8" stroke-width="1.6" fill="none"/><path d="M6.8 6.8L10.8 10.3" stroke="#e8e8e8" stroke-width="2"/></svg>
<div class="a t" style="left:621px;top:327px;font-size:12px;color:#e8e8e8">类型</div>
<svg style="left:673px;top:331px" width="9" height="5"><path d="M0.5 0.5L4.5 4.2L8.5 0.5" stroke="#bdbdbd" fill="none" stroke-width="1.1"/></svg>
<svg style="left:701px;top:326px" width="12" height="10"><rect x="0.6" y="0.6" width="10.8" height="8.8" stroke="#d8d8d8" stroke-width="1.2" fill="none"/><path d="M2.5 8L4.5 5L6 6.5L7.5 4L9.8 8Z" fill="#d8d8d8"/></svg>
<svg style="left:725px;top:325px" width="13" height="12"><circle cx="6.2" cy="6" r="5.2" stroke="#d8d8d8" stroke-width="1.3" fill="none"/><path d="M9.9 2.3A5.2 5.2 0 0 1 2.5 9.7Z" fill="#d8d8d8"/></svg>
<svg style="left:750px;top:326px" width="12" height="11"><path d="M0.7 0.7H11.3V3.7H10.3V2.2H7V9.2H8.5V10.3H3.5V9.2H5V2.2H1.7V3.7H0.7Z" fill="#d8d8d8" stroke="#d8d8d8" stroke-width="0.6"/></svg>
<svg style="left:0;top:0" width="884" height="538"><rect x="775.5" y="327.5" width="8.5" height="8.5" stroke="#d8d8d8" stroke-width="1.1" fill="none"/><g fill="#535353" stroke="#d8d8d8" stroke-width="1"><circle cx="775.5" cy="327.5" r="1.4"/><circle cx="784" cy="327.5" r="1.4"/><circle cx="775.5" cy="336" r="1.4"/><circle cx="784" cy="336" r="1.4"/></g></svg>
<svg style="left:799px;top:326px" width="11" height="13"><path d="M3.5 0.7H7.5L10.3 3.5V11.3H6" stroke="#d8d8d8" stroke-width="1.2" fill="none"/><path d="M7.5 0.7V3.5H10.3" stroke="#d8d8d8" stroke-width="1" fill="none"/><rect x="0" y="5.5" width="6" height="7" fill="#d8d8d8"/></svg>
<div class="a" style="left:825px;top:323px;width:10px;height:18px;background:#404040;border:1px solid #5c5c5c;border-radius:5px"></div>
<div class="a" style="left:825.5px;top:323px;width:9px;height:9px;background:#e8e8e8;border-radius:50%"></div>
<div class="a" style="left:595px;top:345px;width:284px;height:1px;background:#474747"></div>
<!-- blend row -->
<div class="dd" style="left:599px;top:350px;width:117px;height:23px;border-color:#646464"></div>
<div class="a t" style="left:608px;top:356.5px;font-size:12px;color:#e8e8e8">正常</div>
<svg style="left:703px;top:360px" width="9" height="5"><path d="M0.5 0.5L4.5 4.2L8.5 0.5" stroke="#bdbdbd" fill="none" stroke-width="1.1"/></svg>
<div class="a t" style="left:723px;top:355px;font-size:12px;color:#d8d8d8">不透明度:</div>
<div class="dd" style="left:779px;top:350px;width:55px;height:19px;border-color:#646464"></div>
<div class="sep" style="left:818px;top:351px;height:17px;background:#626262"></div>
<div class="a t" style="left:783px;top:355px;font-size:12px;color:#ececec;letter-spacing:-0.6px">100%</div>
<svg style="left:822px;top:358px" width="9" height="5"><path d="M0.5 0.5L4.5 4.2L8.5 0.5" stroke="#bdbdbd" fill="none" stroke-width="1.1"/></svg>
<div class="a" style="left:595px;top:374px;width:284px;height:1px;background:#474747"></div>
<!-- lock row -->
<div class="a t" style="left:602px;top:383px;font-size:12px;color:#d8d8d8">锁定:</div>
<svg style="left:0;top:0" width="884" height="538">
<rect x="639.5" y="383.5" width="10" height="10" fill="#4c4c4c" stroke="#8c8c8c" stroke-width="1"/>
<path d="M643 384H646V387H643ZM640 387H643V390H640ZM646 387H649V390H646ZM643 390H646V393H643Z" fill="#8c8c8c"/>
<path d="M672 383.5L665.5 390.3L667.2 392L673.3 385Z" fill="#8c8c8c" stroke="#8c8c8c" stroke-width="0.8" stroke-linejoin="round"/>
<path d="M664.8 390.5C662.6 390.6 661.7 392.2 661.6 393.6C661.5 394.6 660.8 395.4 659.9 395.9C663 396.6 667 395.3 667.2 392.6Z" fill="#8c8c8c"/>
<path d="M688.5 383.5V393M683.5 388.2H693.5" stroke="#dcdcdc" stroke-width="1.5"/>
<path d="M688.5 381.7L686 384.4H691ZM688.5 394.8L686 392.1H691ZM682 388.2L684.7 385.7V390.7ZM695 388.2L692.3 385.7V390.7Z" fill="#dcdcdc"/>
<path d="M706.5 383.6V396M703.7 386.3H712M715.3 392.8V396M703.7 393.3H718" stroke="#dcdcdc" stroke-width="1" stroke-dasharray="1.2 1.3"/>
<path d="M706.5 386.3H712.3L715.3 389.3V393.3H706.5Z" stroke="#dcdcdc" stroke-width="1.4" fill="none"/>
<path d="M716 383.8L717.6 385.4" stroke="#dcdcdc" stroke-width="1"/>
<path d="M730.3 389.3V386.8A2.7 2.7 0 0 1 735.7 386.8V389.3" stroke="#dcdcdc" stroke-width="1.9" fill="none"/>
<rect x="727.7" y="389" width="10.5" height="5.8" rx="0.6" fill="#dcdcdc"/>
<circle cx="733" cy="391.9" r="1" fill="#535353"/>
</svg>
<div class="a t" style="left:747px;top:383px;font-size:12px;color:#d8d8d8">填充:</div>
<div class="dd" style="left:779px;top:379px;width:55px;height:19px;border-color:#646464"></div>
<div class="sep" style="left:818px;top:380px;height:17px;background:#626262"></div>
<div class="a t" style="left:783px;top:384px;font-size:12px;color:#ececec;letter-spacing:-0.6px">100%</div>
<svg style="left:822px;top:387px" width="9" height="5"><path d="M0.5 0.5L4.5 4.2L8.5 0.5" stroke="#bdbdbd" fill="none" stroke-width="1.1"/></svg>
<!-- layer rows -->
<div class="a" style="left:595px;top:406px;width:268px;height:102px;background:#535353"></div>
<div class="a" style="left:625px;top:406px;width:238px;height:33px;background:#535353"></div>
<div class="a" style="left:595px;top:438px;width:268px;height:1px;background:#474747"></div>
<div class="a" style="left:625px;top:439px;width:238px;height:40px;background:#696969"></div>
<div class="a" style="left:595px;top:479px;width:268px;height:1px;background:#474747"></div>
<div class="a" style="left:625px;top:480px;width:238px;height:1px;background:#6e6e6e"></div>
<div class="a" style="left:624px;top:406px;width:1px;height:102px;background:#474747"></div>
<svg style="left:603px;top:418px" width="15" height="10"><path d="M0.7 5.3C3 0.4 11.9 0.4 14.2 5.3C11.9 10.2 3 10.2 0.7 5.3Z" fill="#e0e0e0"/><circle cx="7.4" cy="5.3" r="2.5" fill="#3c3c3c"/><circle cx="8.4" cy="4.3" r="0.75" fill="#e8e8e8"/></svg>
<svg style="left:603px;top:456px" width="15" height="10"><path d="M0.7 5.3C3 0.4 11.9 0.4 14.2 5.3C11.9 10.2 3 10.2 0.7 5.3Z" fill="#e0e0e0"/><circle cx="7.4" cy="5.3" r="2.5" fill="#3c3c3c"/><circle cx="8.4" cy="4.3" r="0.75" fill="#e8e8e8"/></svg>
<svg style="left:603px;top:493px" width="15" height="10"><path d="M0.7 5.3C3 0.4 11.9 0.4 14.2 5.3C11.9 10.2 3 10.2 0.7 5.3Z" fill="#e0e0e0"/><circle cx="7.4" cy="5.3" r="2.5" fill="#3c3c3c"/><circle cx="8.4" cy="4.3" r="0.75" fill="#e8e8e8"/></svg>
<div class="a" style="left:629px;top:410px;width:32px;height:26px;background:#fff;border:1px solid #2a2a2a;border-top-width:2px"></div>
<div class="a t" style="left:671px;top:417px;font-size:12px;color:#e4e4e4">图层 <span style="font-size:11px">1</span></div>
<svg style="left:627px;top:442px" width="37" height="37"><path d="M0.6 12.5V0.6H12.5M23.5 0.6H35.4V12.5M35.4 23.5V35.4H23.5M12.5 35.4H0.6V23.5" stroke="#f4f4f4" stroke-width="1.2" fill="none"/><path d="M11 12H24.5V16H23.3V13.5H18.8V24.5H21.5V26H14V24.5H16.7V13.5H12.2V16H11Z" fill="#d8d8d8"/></svg>
<div class="a t" style="left:671px;top:456px;font-size:11px;color:#e4e4e4">1</div>
<div class="a" style="left:629px;top:486px;width:32px;height:22px;background:#fff;border:1px solid #2a2a2a;border-top-width:2px;border-bottom:none"></div>
<div class="a t" style="left:671px;top:491px;font-size:12px;color:#e4e4e4">图层 <span style="font-size:11px">0</span></div>
<!-- layers scrollbar -->
<div class="a" style="left:863px;top:406px;width:16px;height:102px;background:#474747"></div>
<svg style="left:866px;top:413px" width="10" height="6"><path d="M0.5 5L5 0.8L9.5 5" stroke="#8a8a8a" fill="none" stroke-width="1.2"/></svg>
<div class="a" style="left:865px;top:441px;width:12px;height:48px;background:#666;border-radius:3px"></div>
<svg style="left:866px;top:495px" width="10" height="6"><path d="M0.5 0.8L5 5L9.5 0.8" stroke="#8a8a8a" fill="none" stroke-width="1.2"/></svg>
<!-- footer -->
<div class="a" style="left:595px;top:508px;width:284px;height:1px;background:#474747"></div>
<svg style="left:0;top:0" width="884" height="538" fill="#e0e0e0">
<path d="M683 517.5H680.5A3 3 0 0 0 680.5 523.5H683M685.5 517.5H688A3 3 0 0 1 688 523.5H685.5M681.5 520.5H687" stroke="#8a8a8a" stroke-width="1.4" fill="none"/>
<rect x="731" y="515" width="13" height="10" rx="0.8"/><circle cx="737.5" cy="520" r="3" fill="#535353"/>
<circle cx="765.5" cy="520.5" r="5" stroke="#e0e0e0" stroke-width="1.3" fill="none"/><path d="M769.1 516.9A5 5 0 0 1 761.9 524.1Z"/><path d="M770 527.3H774L772 529.3Z"/>
<path d="M786 515.5H791L792.5 517H798.4V525.2H786Z"/><path d="M786 518.3H798.4" stroke="#535353" stroke-width="0.8"/>
<rect x="814.3" y="515.5" width="10.5" height="10.5" stroke="#e0e0e0" stroke-width="1.2" fill="none"/><path d="M819.55 518V523.5M816.8 520.75H822.3" stroke="#e0e0e0" stroke-width="1.2"/>
<path d="M839.8 517.8H851M843.8 517.8V515.9H847V517.8" stroke="#e0e0e0" stroke-width="1.2" fill="none"/>
<path d="M841.4 518.5H849.4V526.6H841.4Z" stroke="#e0e0e0" stroke-width="1.2" fill="none"/><path d="M843.7 520V525M845.4 520V525M847.1 520V525" stroke="#e0e0e0" stroke-width="0.9"/>
</svg>
<div class="a t" style="left:705px;top:514px;font-size:14px;font-style:italic;color:#e0e0e0;letter-spacing:-0.5px">fx</div>
<svg style="left:0;top:0" width="884" height="538"><path d="M715 527.3H719L717 529.3Z" fill="#e0e0e0"/></svg>



</body></html>
